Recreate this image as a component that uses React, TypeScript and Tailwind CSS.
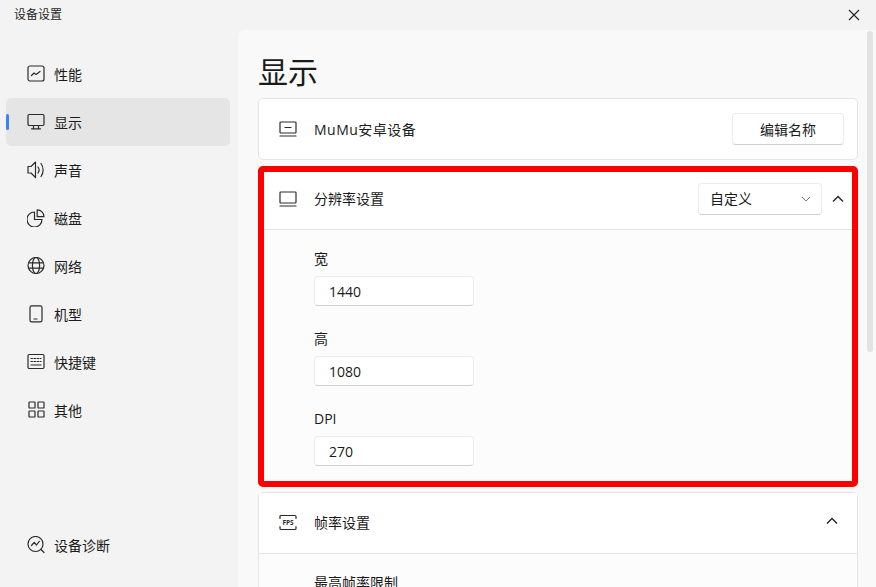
import React from 'react';

const FONT = "font-['Open_Sans','Noto_Sans_CJK_SC',sans-serif]";

const ICON_PROPS = {
  fill: 'none',
  stroke: 'currentColor',
  strokeWidth: 1.2,
  strokeLinecap: 'round' as const,
  strokeLinejoin: 'round' as const,
};

const NAV_ITEMS: { label: string; active?: boolean; icon: React.ReactNode }[] = [
  {
    label: '性能',
    icon: (
      <svg width="18" height="18" viewBox="0 0 18 18" {...ICON_PROPS}>
        <rect x="1" y="1" width="16" height="15" rx="2" />
        <path d="M4.5 10.5 7 8l2 1.5L13 6.5" />
      </svg>
    ),
  },
  {
    label: '显示',
    active: true,
    icon: (
      <svg width="18" height="18" viewBox="0 0 18 18" {...ICON_PROPS}>
        <rect x="1" y="1.5" width="16" height="11" rx="1.2" />
        <path d="M6.5 12.5v3M11.5 12.5v3M4.5 15.8h9" />
      </svg>
    ),
  },
  {
    label: '声音',
    icon: (
      <svg width="18" height="18" viewBox="0 0 18 18" {...ICON_PROPS}>
        <path d="M1 5.5v6.5h3l4.5 4.5V1L4 5.5z" />
        <path d="M11 6c1.2 1.6 1.2 4.4 0 6M14 2.5c2.8 3.6 2.8 9.4 0 13" />
      </svg>
    ),
  },
  {
    label: '磁盘',
    icon: (
      <svg width="18" height="18" viewBox="0 0 18 18" {...ICON_PROPS}>
        <path d="M7.5 3a7.5 7.5 0 1 0 7.5 7.5H7.5z" />
        <path d="M10.2 0.8v6.9H17A6.9 6.9 0 0 0 10.2 0.8z" />
      </svg>
    ),
  },
  {
    label: '网络',
    icon: (
      <svg width="18" height="18" viewBox="0 0 18 18" {...ICON_PROPS}>
        <circle cx="9" cy="8.5" r="8" />
        <ellipse cx="9" cy="8.5" rx="3.6" ry="8" />
        <path d="M1.6 5.8h14.8M1.6 11.2h14.8" />
      </svg>
    ),
  },
  {
    label: '机型',
    icon: (
      <svg width="18" height="18" viewBox="0 0 18 18" {...ICON_PROPS}>
        <rect x="3" y="0.8" width="12" height="16" rx="1.6" />
        <path d="M7 14h3" />
      </svg>
    ),
  },
  {
    label: '快捷键',
    icon: (
      <svg width="18" height="18" viewBox="0 0 18 18" {...ICON_PROPS}>
        <rect x="1" y="1.5" width="16" height="14" rx="1.2" />
        <path d="M4 5.5h1.5M7 5.5h1.5M10 5.5h1.5M13 5.5h1M4 8.5h1.5M7 8.5h1.5M10 8.5h1.5M13 8.5h1M4 12h10" />
      </svg>
    ),
  },
  {
    label: '其他',
    icon: (
      <svg width="18" height="18" viewBox="0 0 18 18" {...ICON_PROPS}>
        <rect x="2" y="1" width="6" height="6" rx="0.6" />
        <rect x="11" y="1" width="6" height="6" rx="0.6" />
        <rect x="2" y="10" width="6" height="6" rx="0.6" />
        <rect x="11" y="10" width="6" height="6" rx="0.6" />
      </svg>
    ),
  },
];

function NavItem({ label, active, icon }: { label: string; active?: boolean; icon: React.ReactNode }) {
  return (
    <div className={`relative flex h-12 items-center gap-[9px] rounded-[5px] pl-[21px] ${active ? 'bg-[#e5e5e5]' : ''}`}>
      {active && <div className="absolute left-0 top-[16px] h-4 w-[3px] rounded-full bg-[#3b82f6]" />}
      <span className="flex h-[18px] w-[18px] text-[#2b2b2b]">{icon}</span>
      <span className="pt-[2px] text-[14px] leading-5 text-[#1a1a1a]">{label}</span>
    </div>
  );
}

function Chevron() {
  return (
    <svg width="12" height="8" viewBox="0 0 12 8" fill="none" stroke="#222" strokeWidth="1.4">
      <path d="M1 6.5 6 1.5l5 5" />
    </svg>
  );
}

function Field({ label, value }: { label: string; value: string }) {
  return (
    <div className="mb-[23px] last:mb-0">
      <div className="mb-[7px] text-[14px] leading-5 text-[#1a1a1a]">{label}</div>
      <div className="flex h-[30px] w-40 items-center rounded-[4px] border border-[#ececec] border-b-[#cfcfcf] bg-white pl-[14px] text-[14px] text-[#1a1a1a]">
        {value}
      </div>
    </div>
  );
}

export default function App() {
  return (
    <div className={`flex h-[587px] w-[876px] flex-col overflow-hidden bg-[#f3f3f3] ${FONT}`}>
      {/* Title bar */}
      <div className="flex h-[30px] shrink-0 items-center justify-between pl-[14px] pr-[16px]">
        <span className="text-[12px] text-[#1f1f1f]">设备设置</span>
        <svg width="12" height="12" viewBox="0 0 12 12" fill="none" stroke="#222" strokeWidth="1.1">
          <path d="M1 1l10 10M11 1 1 11" />
        </svg>
      </div>

      <div className="flex min-h-0 flex-1">
        {/* Sidebar */}
        <div className="flex w-[238px] shrink-0 flex-col pb-[18px] pl-[6px] pr-[8px] pt-5">
          {NAV_ITEMS.map((item) => (
            <NavItem key={item.label} {...item} />
          ))}
          <div className="mt-auto">
            <NavItem
              label="设备诊断"
              icon={
                <svg width="18" height="18" viewBox="0 0 18 18" {...ICON_PROPS}>
                  <circle cx="8.5" cy="8" r="7.5" />
                  <path d="M4.5 9.5 7.2 6.3 9.5 9l2.8-3.7M14 13.5l3 3" />
                </svg>
              }
            />
          </div>
        </div>

        {/* Content */}
        <div className="relative min-w-0 flex-1 overflow-hidden rounded-tl-[6px] bg-[#f9f9f9] pl-5 pr-[18px]">
          <div className="absolute right-[3px] top-[1px] h-[321px] w-[6px] rounded-full bg-[#e2e2e2]" />

          <h1 className="mb-[5px] pt-[20px] text-[30px] font-normal leading-[43px] text-[#1a1a1a]">显示</h1>

          {/* Device name */}
          <div className="mb-[6px] flex h-[62px] items-center rounded-[5px] border border-[#e5e5e5] bg-white pl-5 pr-[13px]">
            <svg width="18" height="18" viewBox="0 0 18 18" className="mr-[17px] text-[#2b2b2b]" {...ICON_PROPS}>
              <rect x="1" y="2" width="16" height="11" rx="0.8" />
              <path d="M6 7.5h6M1 16h16" />
            </svg>
            <span className="text-[14px] tracking-[0.5px] text-[#1a1a1a]">MuMu安卓设备</span>
            <div className="ml-auto flex h-8 w-28 items-center justify-center rounded-[4px] border border-[#ececec] border-b-[#cfcfcf] bg-white text-[14px] text-[#1a1a1a]">
              编辑名称
            </div>
          </div>

          {/* Resolution */}
          <div className="mb-[5px] rounded-[5px] border-[6px] border-[#ff0000] bg-[#fcfcfc]">
            <div className="flex h-[58px] items-center border-b border-[#e5e5e5] bg-white pb-[4px] pl-[15px] pr-[8px]">
              <svg width="18" height="18" viewBox="0 0 18 18" className="mr-[17px] text-[#2b2b2b]" {...ICON_PROPS}>
                <rect x="1" y="2" width="16" height="11" rx="0.8" />
                <path d="M1 16h16" />
              </svg>
              <span className="text-[14px] text-[#1a1a1a]">分辨率设置</span>
              <div className="ml-auto mr-[10px] flex h-[32px] w-[124px] items-center justify-between rounded-[4px] border border-[#ececec] border-b-[#cfcfcf] bg-white pl-[11px] pr-[10px] text-[14px] text-[#1a1a1a]">
                自定义
                <svg width="10" height="6" viewBox="0 0 10 6" fill="none" stroke="#777" strokeWidth="1">
                  <path d="M1 1l4 4 4-4" />
                </svg>
              </div>
              <Chevron />
            </div>
            <div className="pb-[15px] pl-[50px] pt-[19px]">
              <Field label="宽" value="1440" />
              <Field label="高" value="1080" />
              <Field label="DPI" value="270" />
            </div>
          </div>

          {/* Frame rate */}
          <div className="rounded-[5px] border border-[#e5e5e5] bg-[#fcfcfc]">
            <div className="flex h-[61px] items-center border-b border-[#e5e5e5] bg-white pl-5 pr-[19px]">
              <svg width="18" height="18" viewBox="0 0 18 18" className="mr-[17px] text-[#2b2b2b]" {...ICON_PROPS}>
                <path d="M1 4.5V2.5a1 1 0 0 1 1-1h14a1 1 0 0 1 1 1v2M1 12.5v2a1 1 0 0 0 1 1h14a1 1 0 0 0 1-1v-2" />
                <text x="9" y="10.8" textAnchor="middle" fontSize="6.5" fontWeight="700" fill="currentColor" stroke="none">FPS</text>
              </svg>
              <span className="pb-[2px] text-[14px] text-[#1a1a1a]">帧率设置</span>
              <div className="ml-auto pb-[4px]">
                <Chevron />
              </div>
            </div>
            <div className="pl-[55px] pt-[19px] text-[14px] leading-5 text-[#1a1a1a]">最高帧率限制</div>
          </div>
        </div>
      </div>
    </div>
  );
}
